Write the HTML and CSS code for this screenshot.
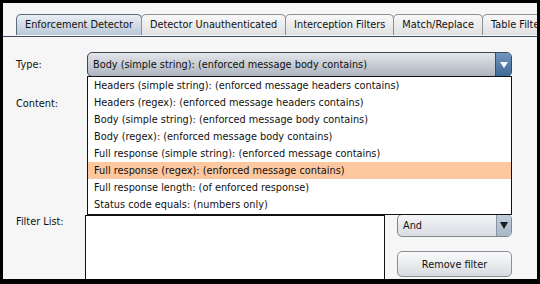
FILE: index.html
```html
<!doctype html>
<html>
<head>
<meta charset="utf-8">
<title>Enforcement Detector</title>
<link rel="stylesheet" href="styles.css">
</head>
<body>
<div class="window">
	<div class="tabs">
		<div class="tab active">Enforcement Detector</div>
		<div class="tab">Detector Unauthenticated</div>
		<div class="tab">Interception Filters</div>
		<div class="tab">Match/Replace</div>
		<div class="tab">Table Filter</div>
	</div>
	<div class="panel">
		<div class="form">
			<div class="lbl">Type:</div>
			<div class="combo combo-type">
				<span class="combo-text">Body (simple string): (enforced message body contains)</span>
				<span class="combo-btn"><svg width="8" height="6" viewBox="0 0 8 6"><polygon points="0,0 8,0 4,6" fill="#fff"/></svg></span>
			</div>
			<div class="lbl lbl-top">Content:</div>
			<div class="content-field"></div>
			<div class="lbl lbl-list">Filter List:</div>
			<div class="filter-row">
				<div class="filter-list"></div>
				<div class="side">
					<div class="combo combo-and">
						<span class="combo-text">And</span>
						<span class="combo-btn"><svg width="8" height="7" viewBox="0 0 8 7"><polygon points="0,0 8,0 4,7" fill="#1c1c1c"/></svg></span>
					</div>
					<div class="btn">Remove filter</div>
				</div>
			</div>
		</div>
	</div>
	<ul class="popup">
		<li>Headers (simple string): (enforced message headers contains)</li>
		<li>Headers (regex): (enforced message headers contains)</li>
		<li>Body (simple string): (enforced message body contains)</li>
		<li>Body (regex): (enforced message body contains)</li>
		<li>Full response (simple string): (enforced message contains)</li>
		<li class="sel">Full response (regex): (enforced message contains)</li>
		<li>Full response length: (of enforced response)</li>
		<li>Status code equals: (numbers only)</li>
	</ul>
</div>
</body>
</html>
```

FILE: styles.css
```css
*{box-sizing:border-box;}
html,body{margin:0;height:284px;overflow:hidden;}
body{background:#000;padding:3px 3px 0;font-family:"DejaVu Sans",sans-serif;font-size:9.75px;color:#111;}
.window{position:relative;height:276px;background:#f6f6f6;overflow:hidden;}

.tabs{display:flex;padding:11px 0 0 13px;height:34px;border-bottom:1px solid #3d4c5c;}
.tab{height:21px;line-height:19px;padding:0 8px;white-space:nowrap;border:1px solid #8d9095;border-bottom:none;border-radius:5px 5px 0 0;
	background:linear-gradient(#f8f8f8,#e0e0e0);margin-right:-1px;}
.tab.active{background:linear-gradient(#e9eef3,#b9c8d7);border-color:#5b6b7b;}

.form{display:grid;grid-template-columns:69px 427px;row-gap:13px;padding:15px 0 0 13px;}
.lbl{align-self:center;line-height:13px;}
.lbl-top,.lbl-list{align-self:start;}
.lbl-top{padding-top:7px;}

.combo{display:flex;align-items:stretch;border-radius:5px;overflow:hidden;}
.combo-text{flex:1;display:flex;align-items:center;white-space:nowrap;}
.combo-btn{display:flex;align-items:center;justify-content:center;}
.combo-type{height:25px;margin-left:2px;border:1px solid #3e4854;background:linear-gradient(#e3e6ea,#c4cad2 55%,#aeb5bf);}
.combo-type .combo-text{padding-left:5px;}
.combo-type .combo-btn{width:16px;border-left:1px solid #2f5278;background:linear-gradient(#7296bd,#3f6995);}

.content-field{height:112px;margin-left:2px;background:#fff;border:1px solid #6d747c;}

.filter-row{display:flex;gap:12px;height:80px;}
.filter-list{flex:1;background:#fff;border:1px solid #111;}
.side{width:115px;display:flex;flex-direction:column;gap:14px;margin-top:-1px;}
.combo-and{height:23px;border:1px solid #7f8790;background:linear-gradient(#f3f4f6,#d9dde2);}
.combo-and .combo-text{padding-left:5px;}
.combo-and .combo-btn{width:15px;border-left:1px solid #8595a6;background:linear-gradient(#c0ccd8,#a8b8c8);}
.btn{height:26px;display:flex;align-items:center;justify-content:center;border:1px solid #8a9098;border-radius:5px;background:linear-gradient(#fbfbfc,#e6e8eb 60%,#d5d9de);}

.popup{position:absolute;left:84px;top:73px;width:425px;height:139px;margin:0;padding:0;list-style:none;background:#fff;border:1px solid #111;}
.popup li{height:17px;line-height:17px;padding-left:6px;white-space:nowrap;}
.popup li.sel{background:#fdc79f;}
```
